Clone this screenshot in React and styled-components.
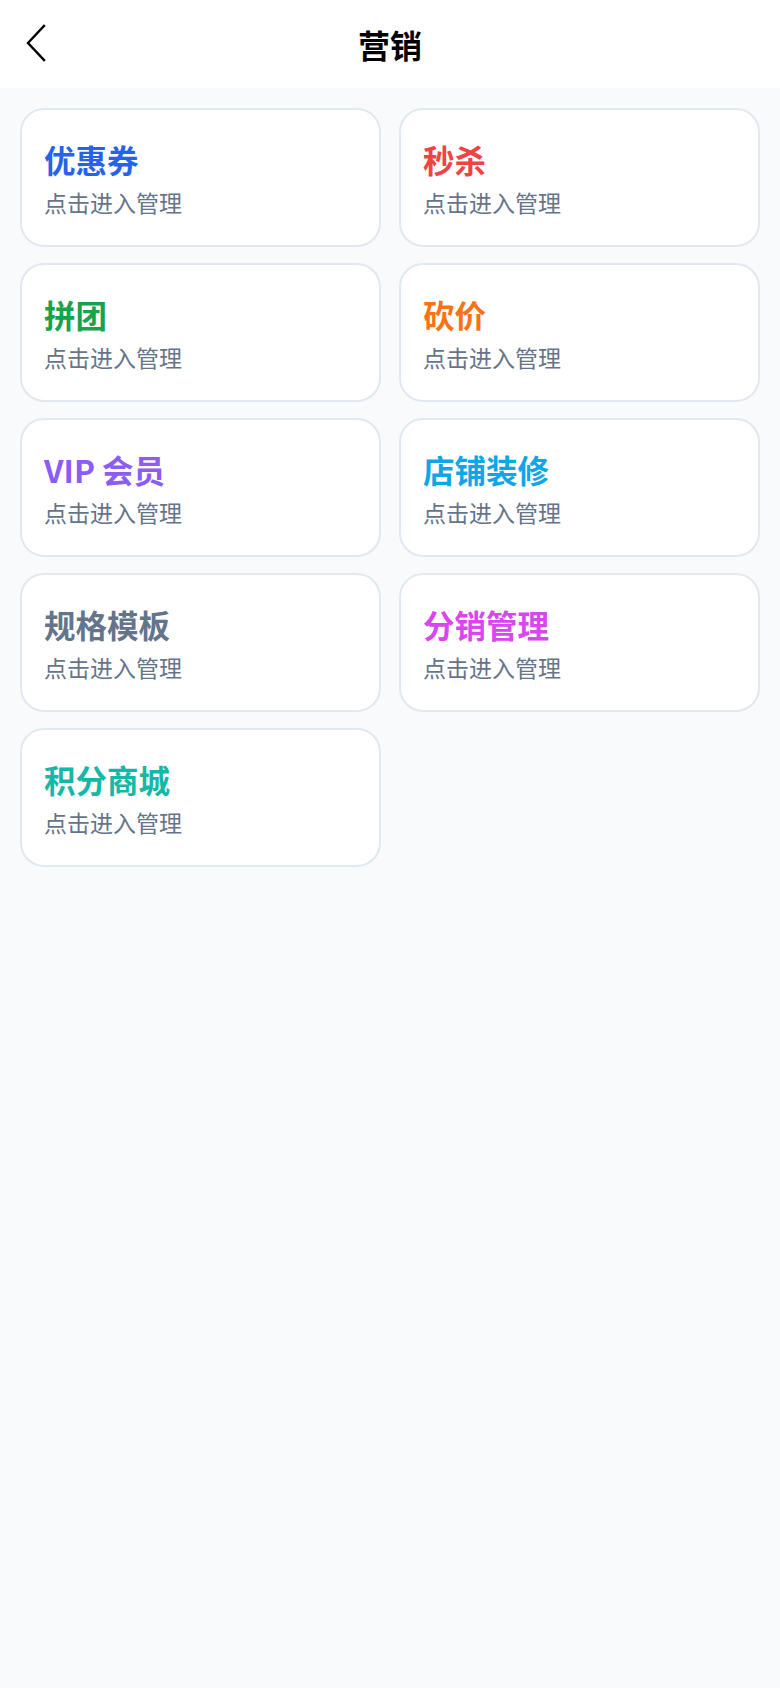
import React from "react";
import styled, { createGlobalStyle } from "styled-components";

const GlobalStyle = createGlobalStyle`
  html, body { margin: 0; padding: 0; }
  body {
    background: #f8fafc;
    font-family: "Noto Sans CJK SC", "Noto Sans", sans-serif;
  }
`;

const Page = styled.div`
  min-height: 1688px;
  background: #f8fafc;
  display: flex;
  flex-direction: column;
`;

const Header = styled.header`
  height: 88px;
  background: #ffffff;
  display: flex;
  align-items: center;
  justify-content: center;
  position: relative;
`;

const BackButton = styled.button`
  position: absolute;
  left: 20px;
  top: 20px;
  width: 34px;
  height: 46px;
  padding: 0;
  border: none;
  background: transparent;
  display: flex;
  align-items: center;
  justify-content: center;
  cursor: pointer;
`;

const Title = styled.h1`
  margin: 0;
  font-size: 32px;
  line-height: 44px;
  font-weight: 700;
  color: #000000;
`;

const Grid = styled.main`
  display: grid;
  grid-template-columns: 1fr 1fr;
  column-gap: 18px;
  row-gap: 16px;
  padding: 20px;
`;

const Card = styled.div`
  background: #ffffff;
  border: 2px solid #e2e8f0;
  border-radius: 24px;
  padding: 29px 22px 27px;
  display: flex;
  flex-direction: column;
  cursor: pointer;
`;

const CardTitle = styled.div`
  font-size: 31.5px;
  line-height: 40px;
  font-weight: 700;
  color: ${(p) => p.$color};
`;

const CardSub = styled.div`
  margin-top: 7px;
  font-size: 23px;
  line-height: 32px;
  color: #64748b;
`;

const items = [
  { title: "优惠券", color: "#2563eb" },
  { title: "秒杀", color: "#ef4444" },
  { title: "拼团", color: "#16a34a" },
  { title: "砍价", color: "#f97316" },
  { title: "VIP 会员", color: "#8b5cf6" },
  { title: "店铺装修", color: "#0ea5e9" },
  { title: "规格模板", color: "#64748b" },
  { title: "分销管理", color: "#d946ef" },
  { title: "积分商城", color: "#14b8a6" },
];

export default function App() {
  return (
    <>
      <GlobalStyle />
      <Page>
        <Header>
          <BackButton aria-label="返回">
            <svg width="22" height="38" viewBox="0 0 22 38" fill="none">
              <path d="M18 2 L2 19 L18 36" stroke="#000" strokeWidth="2.4" strokeLinecap="square" strokeLinejoin="miter" />
            </svg>
          </BackButton>
          <Title>营销</Title>
        </Header>
        <Grid>
          {items.map((it) => (
            <Card key={it.title}>
              <CardTitle $color={it.color}>{it.title}</CardTitle>
              <CardSub>点击进入管理</CardSub>
            </Card>
          ))}
        </Grid>
      </Page>
    </>
  );
}
